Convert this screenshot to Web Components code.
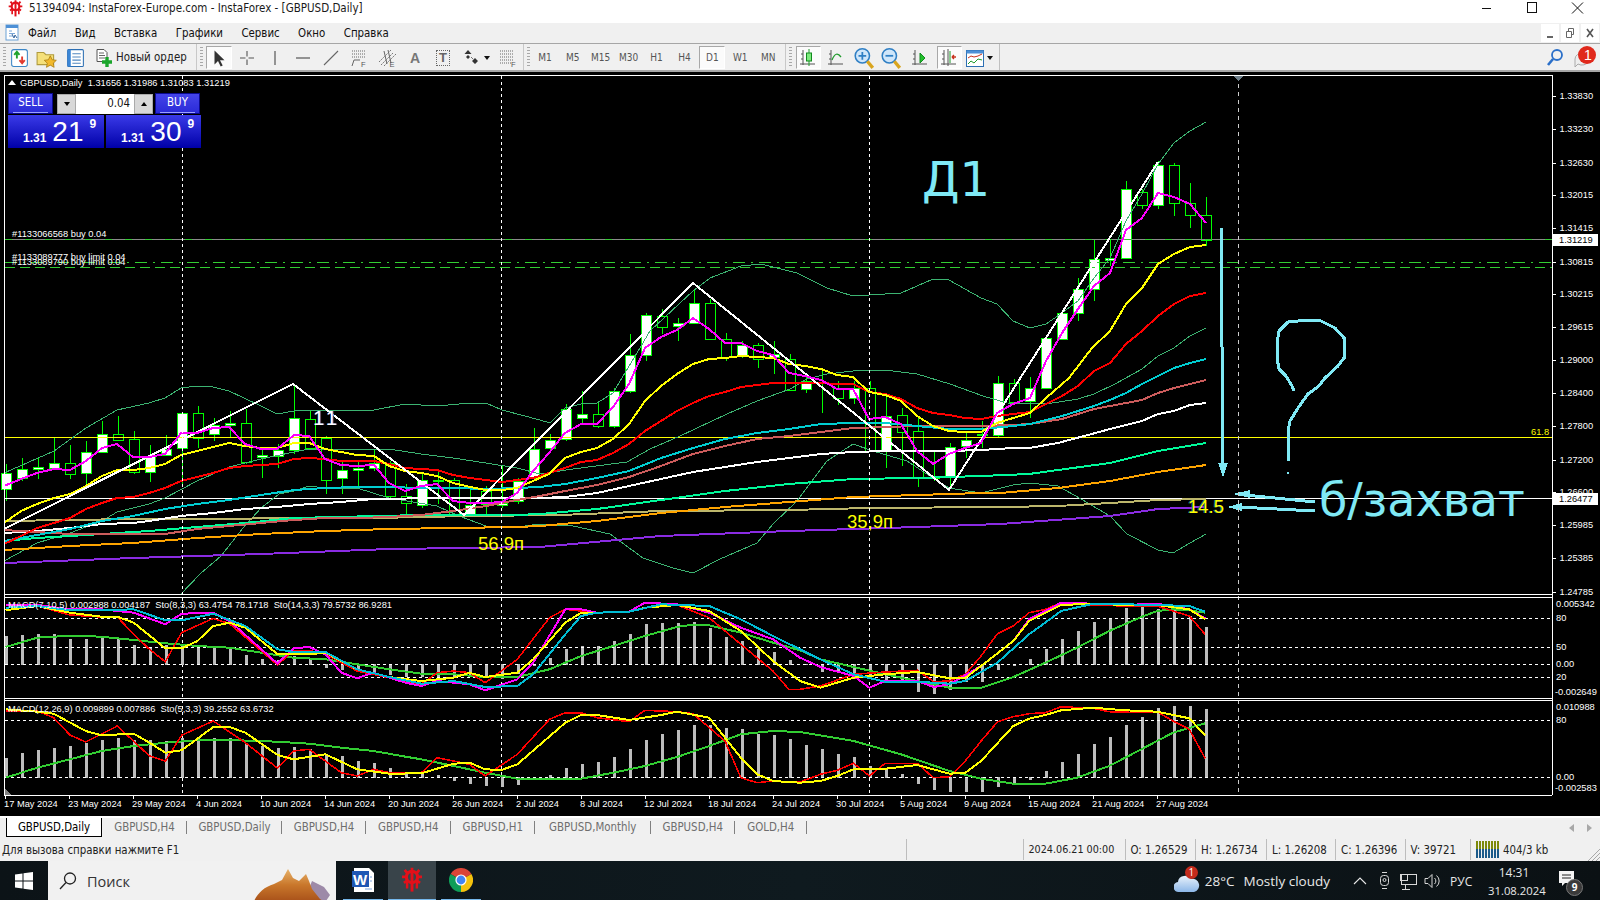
<!DOCTYPE html>
<html lang="ru"><head><meta charset="utf-8"><title>InstaForex</title>
<style>html,body{margin:0;padding:0;background:#000;overflow:hidden}</style>
</head><body>
<mt-app>
<mt-title>51394094: InstaForex-Europe.com - InstaForex - [GBPUSD,Daily]</mt-title>
<mt-menu><span>Файл</span><span>Вид</span><span>Вставка</span><span>Графики</span><span>Сервис</span><span>Окно</span><span>Справка</span></mt-menu>
<mt-toolbar></mt-toolbar>
<mt-chart><mt-order></mt-order></mt-chart>
<mt-tabs>
<mt-tab active style="width:96px">GBPUSD,Daily</mt-tab><mt-tab style="width:85px">GBPUSD,H4</mt-tab><mt-tab style="width:95px">GBPUSD,Daily</mt-tab><mt-tab style="width:84px">GBPUSD,H4</mt-tab><mt-tab style="width:84.5px">GBPUSD,H4</mt-tab><mt-tab style="width:84.5px">GBPUSD,H1</mt-tab><mt-tab style="width:115.5px">GBPUSD,Monthly</mt-tab><mt-tab style="width:84.5px">GBPUSD,H4</mt-tab><mt-tab style="width:71.5px">GOLD,H4</mt-tab>
</mt-tabs>
<mt-status>
<mt-cell style="width:906px;border:0;padding-left:2px">Для вызова справки нажмите F1</mt-cell><mt-cell style="width:116.5px"></mt-cell><mt-cell style="width:102px;font-size:10.7px">2024.06.21 00:00</mt-cell><mt-cell style="width:70.5px">O: 1.26529</mt-cell><mt-cell style="width:71px">H: 1.26734</mt-cell><mt-cell style="width:69px">L: 1.26208</mt-cell><mt-cell style="width:69.6px">C: 1.26396</mt-cell><mt-cell style="width:65.4px">V: 39721</mt-cell><mt-cell style="width:120px" data-traffic>404/3 kb</mt-cell>
</mt-status>
<mt-taskbar></mt-taskbar>
</mt-app>
<script>
const UI="'DejaVu Sans Condensed','DejaVu Sans',sans-serif";
const NUM="'Liberation Sans',Arial,sans-serif";
const SEG="'Open Sans','Noto Sans',sans-serif";
const DJ="'DejaVu Sans',sans-serif";
function def(tag,css,html,init){customElements.define(tag,class extends HTMLElement{constructor(){super();const r=this.attachShadow({mode:'open'});r.innerHTML='<style>'+css+'</style>'+html;if(init)init(r,this);}});}

const LOGO=(s,h)=>`<svg width="${s}" height="${h}" viewBox="0 0 18 20"><g fill="none" stroke="#e2101a"><circle cx="9" cy="7.5" r="4.6" stroke-width="2.6"/><path d="M9 0v3M3 1.8l2 2.4M15 1.8l-2 2.4M.8 7.5h3M17.2 7.5h-3M2.4 12.4l2.4-1.8M15.6 12.4l-2.4-1.8" stroke-width="2.2"/><path d="M9 3.5V19.5" stroke-width="2.4"/><path d="M5 10.5V17M13 10.5V17" stroke-width="2"/></g></svg>`;

def('mt-app',`:host{display:flex;flex-direction:column;width:1600px;height:900px;overflow:hidden;background:#f0f0f0;font-family:${UI};font-stretch:condensed}`,`<slot></slot>`);

def('mt-title',`:host{display:flex;align-items:center;height:23px;background:#fff;color:#1a1a1a;font:11.5px ${UI};font-stretch:condensed;flex:none}
.l{width:29px;display:flex;justify-content:center;padding-left:2px;box-sizing:border-box;margin-top:-7px}
.t{flex:1;margin-top:-7px}
.b{display:flex;margin-top:-8px}.b svg{display:block;width:45px;height:14px}`,
`<div class="l">${LOGO(15,17)}</div><div class="t"><slot></slot></div><div class="b"><svg viewBox="0 0 45 14"><path d="M17 7.5h9" stroke="#111" fill="none"/></svg><svg viewBox="0 0 45 14"><rect x="17.5" y="1.5" width="9" height="10" stroke="#111" fill="none"/></svg><svg viewBox="0 0 45 14"><path d="M17 1.5l11 11M28 1.5l-11 11" stroke="#111" fill="none"/></svg></div>`);

def('mt-menu',`:host{display:flex;align-items:center;height:20px;background:#f0f0f0;border-bottom:1px solid #a6a6a6;font:11.4px ${UI};font-stretch:condensed;color:#111;flex:none;box-sizing:content-box}
.ic{width:28px;padding-left:4px;box-sizing:border-box;display:flex}
.m{display:flex;gap:18.4px;flex:1}
.w{display:flex;gap:2px;padding-right:1px}
.w svg{width:18px;height:18px;background:#fff;display:block}
::slotted(span){display:block}`,
`<div class="ic"><svg width="16" height="18" viewBox="0 0 16 18"><rect x="2" y="1" width="12" height="15" fill="#fff" stroke="#6ba1d6"/><rect x="2" y="1" width="12" height="3" fill="#4d90d6"/><path d="M5 7h3M5 9.5h6M5 12h4" stroke="#7aa7d8"/><path d="M8 10l2 4 1-3 2 3" stroke="#39689e" fill="none"/></svg></div><div class="m"><slot></slot></div>
<div class="w"><svg viewBox="0 0 18 18"><rect x="6" y="12" width="6" height="2" fill="#666"/></svg><svg viewBox="0 0 18 18"><path d="M5.5 7.5h5v6h-5zM7.5 7V4.5h5v6H11" fill="none" stroke="#666"/></svg><svg viewBox="0 0 18 18"><path d="M6 5l6 8M12 5l-6 8" stroke="#555" stroke-width="1.6" fill="none"/></svg></div>`);

/* ---- toolbar ---- */
const sv=(c,w=20,h=20)=>`<svg width="${w}" height="${h}" viewBox="0 0 20 20" fill="none">${c}</svg>`;
const AX='<path d="M5 2v15M2 16h15M5 6H3M5 11H3" stroke="#555"/>';
def('mt-tool',`:host{display:flex;align-items:center;justify-content:center;flex:none;width:28px;height:23px;box-sizing:border-box;font:11.4px ${UI};font-stretch:condensed;color:#444;gap:2px;margin-top:1px}
:host([pressed]){background:#fbfbfb;border:1px solid;border-color:#a8a8a8 #fff #fff #a8a8a8;margin:1px 1px 0;width:26px}`,`<slot></slot>`);
def('mt-grip',`:host{display:flex;flex:none;align-items:center;justify-content:center;height:24px}.g{width:3px;height:20px;background:repeating-linear-gradient(#a8a8a8 0 1px,transparent 1px 3px)}.s{width:1px;height:26px;background:#c8c8c8;margin-right:3px}`,`<div class="s"></div><div class="g"></div>`);

def('mt-toolbar',`:host{display:flex;align-items:center;height:26px;background:#f0f0f0;border-bottom:2px solid #a6a6a6;flex:none;padding-left:3px;box-sizing:content-box}
.sp{flex:1}
.d{width:0;height:0;border:3px solid transparent;border-top:4px solid #111;margin-top:3px}
.g0{width:3px;height:20px;background:repeating-linear-gradient(#a8a8a8 0 1px,transparent 1px 3px);flex:none}
text{font-family:${NUM}}
`,
(()=>{
 const t=(c,w,a='')=>`<mt-tool ${a} ${w?`style="width:${w}px"`:''}>${c}</mt-tool>`;
 let h='<div class="g0"></div>';
 h+=t(sv(`<rect x="2.5" y="2.5" width="15" height="16" rx="2" fill="#fff" stroke="#3b86c6"/><path d="M7.5 11V5M5 7.5l2.5-3 2.5 3" stroke="#1fa32c" stroke-width="1.8"/><path d="M12.5 9v6M10 12.5l2.5 3 2.5-3" stroke="#e23a2e" stroke-width="1.8"/>`,21,21),27);
 h+=t(sv(`<path d="M1 5h6l2 2h7v9H1z" fill="#f5e07a" stroke="#b09b3e"/><path d="M13 8l1.7 3.6 3.8.5-2.8 2.6.8 3.8-3.5-2-3.5 2 .8-3.8-2.8-2.6 3.8-.5z" fill="#f2b92b" stroke="#a87a12" stroke-width=".7"/>`,22,22),28);
 h+=t(sv(`<rect x="2.5" y="2.5" width="15" height="16" rx="1" fill="#fff" stroke="#2d6fb3"/><rect x="2.5" y="2.5" width="3" height="16" fill="#3b86d6"/><path d="M7 6.5h8M7 9.5h8M7 12.5h8M7 15.5h8" stroke="#5288c0"/>`,21,21),28);
 h+=`<mt-tool style="width:104px;justify-content:flex-start;padding-left:5px;color:#222;white-space:nowrap;gap:2px">${sv(`<path d="M3 1.5h7l3 3v9H3z" fill="#fff" stroke="#555"/><path d="M5 5h5M5 7.5h6M5 10h6" stroke="#666"/><path d="M13 9v10M8 14h10" stroke="#1aa52b" stroke-width="3.4"/>`,20,22)}<span style="margin-top:-1px">Новый ордер</span></mt-tool>`;
 h+='<mt-grip style="width:12px"></mt-grip>';
 h+=t(sv(`<path d="M5.5 2.5v14l3.5-3.5 2.7 5.5 2-1-2.7-5.3h4.5z" fill="#333"/>`),0,'pressed');
 h+=t(sv(`<path d="M10 3v5.5M10 11.5V17M3 10h5.5M11.5 10H17" stroke="#555" stroke-width="1.1"/>`));
 h+=t(sv(`<path d="M10 3v14" stroke="#555" stroke-width="1.2"/>`));
 h+=t(sv(`<path d="M3 10h14" stroke="#555" stroke-width="1.2"/>`));
 h+=t(sv(`<path d="M3 17L17 3" stroke="#666" stroke-width="1.1"/>`));
 h+=t(sv(`<path d="M3 3h14M3 6h14M3 9h14" stroke="#666" stroke-dasharray="1 1"/><path d="M3 18l2-6h6" stroke="#666"/><text x="12" y="18.6" font-size="7.5" fill="#555">F</text>`));
 h+=t(sv(`<path d="M2 14L14 2M4 17L16 5M7 18L19 6" stroke="#777" stroke-dasharray="2 1"/><path d="M7 3l3 13M11 2l3 13" stroke="#666"/><text x="12.5" y="19" font-size="7.5" fill="#555">E</text>`));
 h+=t(`<span style="font:bold 14px ${NUM};color:#777">A</span>`);
 h+=t(`<span style="font:bold 13px/14px ${NUM};color:#666;outline:1px dotted #666;padding:0 2px">T</span>`);
 h+=`<mt-tool style="width:36px;padding-left:2px">${sv(`<path d="M6 2l3.5 4h-7z" fill="#333"/><path d="M6 7l2 2-2 2-2-2zM13 10l3 3-3 3-3-3z" fill="#333"/><path d="M9 9l2 2" stroke="#777"/>`)}<div class="d"></div></mt-tool>`;
 h+=t(sv(`<path d="M3 3h14M3 6h14M3 9h14M3 12h14M3 15h11" stroke="#666" stroke-dasharray="1 1"/><text x="14" y="19" font-size="7.5" fill="#555">F</text>`));
 h+='<mt-grip style="width:10px"></mt-grip>';
 ['M1','M5','M15','M30','H1','H4','D1','W1','MN'].forEach(p=>{h+=t(`<span style="font:10px ${UI};font-stretch:condensed;color:#555">${p}</span>`,p=='D1'?0:27.9,p=='D1'?'pressed':'');});
 h+='<mt-grip style="width:12.5px"></mt-grip>';
 const W=27.6;
 h+=t(sv(`${AX}<path d="M11 1v17" stroke="#1f9a2b"/><rect x="8.5" y="5" width="5" height="8" fill="#7dea7d" stroke="#118a1f"/>`),W-2,'pressed');
 h+=t(sv(`${AX}<path d="M6 12q4-10 9-3" stroke="#1f9a2b" stroke-width="1.3"/>`),W);
 h+=t(sv(`<circle cx="8.5" cy="8" r="6.5" fill="#cfe6fa" stroke="#2f7fc4" stroke-width="1.4"/><path d="M5 8h7M8.5 4.5v7" stroke="#2f7fc4" stroke-width="1.6"/><path d="M13 13l5 6" stroke="#d9a51e" stroke-width="3"/>`,22,22),W);
 h+=t(sv(`<circle cx="8.5" cy="8" r="6.5" fill="#cfe6fa" stroke="#2f7fc4" stroke-width="1.4"/><path d="M5 8h7" stroke="#2f7fc4" stroke-width="1.6"/><path d="M13 13l5 6" stroke="#d9a51e" stroke-width="3"/>`,22,22),W);
 h+=t(sv(`${AX}<path d="M10 5l5 5-5 5z" fill="#22c02c" stroke="#118a1f"/>`),W+3);
 h+=t(sv(`${AX}<path d="M9 1v17" stroke="#555"/><path d="M11 3v12" stroke="#1f9a2b"/><path d="M17 9h-4M13 9l2-2M13 9l2 2" stroke="#c8321c" stroke-width="1.4"/>`),W-2,'pressed');
 h+=`<mt-tool style="width:34px;gap:2px;padding-left:2px;justify-content:flex-start">${sv(`<rect x="1.5" y="2.5" width="17" height="16" fill="#fff" stroke="#2d6fb3"/><rect x="1.5" y="2.5" width="17" height="3" fill="#4d90d6"/><path d="M3 10l3-2 3 1 4-1 4-2" stroke="#c8321c"/><path d="M3 16l3-3 3 2 4-4 4 1" stroke="#1f9a2b"/>`,20,22)}<div class="d" style="margin-top:3px"></div></mt-tool>`;
 h+='<div style="width:1px;height:26px;background:#c0c0c0;flex:none;margin-left:2px"></div><div class="sp"></div>';
 h+=`<mt-tool style="width:26px">${sv(`<circle cx="12" cy="7" r="5" stroke="#2a6fc9" stroke-width="1.8"/><path d="M8 11l-5 6" stroke="#2a6fc9" stroke-width="2.6"/>`)}</mt-tool>`;
 h+=`<div style="width:32px;height:24px;position:relative;flex:none"><svg width="32" height="26" style="position:absolute;top:-1px;left:0"><path d="M7 15a7 6 0 1 1 3 5l-3 3z" fill="#eee" stroke="#aaa"/><circle cx="19" cy="11" r="9" fill="#e0291c"/><text x="16" y="16" font-size="14" fill="#fff">1</text></svg></div>`;
 return h;
})());

/* ---- order panel ---- */
def('mt-order',`:host{position:absolute;left:8px;top:21px;display:grid;grid-template-columns:96px 95px;column-gap:2px;row-gap:1px;font-family:${NUM};color:#fff;width:193px}
.top{grid-column:1/3;display:flex;height:21px;gap:3px;align-items:stretch}
.btn{background:linear-gradient(#4444e8,#2a2ad8);border:1px solid #0a0a90;width:45px;box-sizing:border-box;text-align:center;font:11.4px ${UI};font-stretch:condensed;line-height:17px;position:relative}
.btn:after{content:"";position:absolute;left:4px;right:4px;bottom:0;height:1px;background:#9aa0ff}
.st{display:flex;width:96px;height:20px;margin-left:1px;margin-right:-1px;margin-top:1px;background:#000;gap:0}
.ar{width:19px;background:#d8d8d8;border:1px solid #aaa;box-sizing:border-box;display:flex;align-items:center;justify-content:center}
.ar i{display:block;width:0;height:0;border:3px solid transparent}
.dn i{border-top:4px solid #000;margin-top:3px}.up i{border-bottom:4px solid #000;margin-bottom:3px}
.in{flex:1;background:#fff;color:#111;text-align:right;font:11.4px ${UI};font-stretch:condensed;line-height:18px;padding-right:4px}
.px{height:33px;background:linear-gradient(#3a3ae8,#0000a8);display:flex;align-items:flex-end;padding-left:15px;box-sizing:border-box;white-space:nowrap;position:relative}
.a{font-size:12px;line-height:14px;margin-bottom:3px;font-weight:600}
.b{font-size:28px;line-height:32px;margin-left:6px}
.c{font-size:12px;line-height:13px;align-self:flex-start;margin:3px 0 0 6px;font-weight:600}`,
`<div class="top"><div class="btn">SELL</div><div class="st"><div class="ar dn"><i></i></div><div class="in">0.04</div><div class="ar up"><i></i></div></div><div class="btn">BUY</div></div>
<div class="px"><span class="a">1.31</span><span class="b">21</span><span class="c">9</span></div><div class="px"><span class="a">1.31</span><span class="b">30</span><span class="c">9</span></div>`);

/* ---- chart ---- */
const MA={
mag:"4,485 21,478 37,472 54,468 70,469 86,460 102,447 117,443 133,456 149,456 165,453 181,432 197,432 213,427 229,426 245,443 261,448 277,448 294,434 309,435 325,458 341,464 357,465 374,464 389,482 405,490 421,485 437,483 453,500 470,502 486,502 502,501 517,492 533,470 549,452 565,432 581,423 597,423 613,406 629,383 645,347 661,336 677,329 693,317 709,328 725,342 741,342 757,350 773,354 789,372 805,375 821,379 837,388 853,388 869,418 885,416 901,423 917,450 933,463 949,453 965,447 981,442 997,412 1013,403 1030,397 1046,360 1062,332 1078,308 1094,285 1110,272 1126,229 1142,217 1158,192 1174,196 1190,203 1206,222",
yel:"4,522 21,510 37,503 54,497 70,493 86,485 102,475 117,469 133,469 149,467 165,463 181,454 197,450 213,446 229,442 245,445 261,447 277,447 294,442 309,442 325,448 341,451 357,454 374,455 389,465 405,470 421,472 437,475 453,482 470,486 486,489 502,489 517,487 533,480 549,473 565,457 581,451 597,447 613,438 629,423 645,400 661,385 677,373 693,363 709,358 725,357 741,355 757,356 773,357 789,363 805,365 821,368 837,374 853,376 869,391 885,394 901,400 917,415 933,425 949,430 965,431 981,431 997,422 1013,417 1030,412 1046,397 1069,377 1092,347 1110,330 1126,303 1142,287 1158,263 1174,253 1190,246 1206,244",
red:"4,543 21,535 37,527 54,522 70,517 86,508 102,502 117,497 133,496 149,492 165,487 181,480 197,476 213,472 229,467 245,465 261,464 277,463 294,458 309,457 325,458 341,460 357,460 374,460 389,463 405,467 421,468 437,469 453,474 470,477 486,479 502,481 517,479 533,477 549,472 565,467 581,461 597,459 613,452 629,443 645,430 661,420 677,410 693,402 709,395 725,391 741,386 757,384 773,382 789,382 805,382 821,382 837,383 853,383 869,391 885,393 901,398 917,407 933,412 949,414 965,417 981,418 997,415 1013,413 1030,411 1046,403 1062,395 1078,385 1094,370 1110,362 1126,343 1142,330 1158,315 1174,303 1190,295 1206,292",
cy:"4,540 37,534 70,528 102,520 133,515 165,508 197,503 229,499 261,494 294,489 325,487 357,486 389,486 421,487 453,487 486,488 517,487 540,486 565,483 597,477 629,470 661,457 693,447 725,438 757,432 789,428 821,423 853,422 885,422 917,425 949,428 981,428 1013,425 1030,423 1062,415 1094,405 1110,399 1126,392 1142,383 1158,375 1174,367 1190,362 1206,358",
ros:"4,529 37,531 70,533 102,533 133,533 165,533 197,528 229,525 261,522 294,519 325,517 357,517 389,516 421,514 453,510 486,505 517,499 540,495 565,490 597,484 629,476 661,465 693,453 725,445 757,438 789,435 821,431 853,427 885,426 917,425 949,425 981,425 1013,424 1030,423 1062,418 1094,408 1110,405 1142,399 1158,392 1174,387 1190,383 1206,379",
wh:"4,532 37,530 70,527 102,523 133,522 149,520 181,515 213,512 245,508 277,506 309,503 341,501 374,498 440,497 540,497 565,496 597,492 629,485 661,478 693,471 725,466 757,461 789,457 821,453 853,451 885,450 917,450 949,450 981,449 1013,447 1029,447 1058,442 1088,434 1110,428 1142,420 1158,413 1174,410 1190,404 1206,402",
tl:"4,540 37,537 70,535 102,533 149,530 197,526 245,522 294,517 421,514 470,514 517,514 540,513 597,508 661,499 725,490 789,483 853,478 917,477 981,475 1029,473 1058,469 1110,462 1158,450 1206,442",
or:"4,549 70,545 133,542 197,537 261,533 325,530 389,528 453,527 517,526 540,525 597,520 661,512 725,506 789,501 853,496 917,494 981,492 1000,492 1058,487 1110,480 1158,471 1206,464",
kh:"4,520 133,518 374,517 470,515 560,514 661,510 789,509 869,507 1000,506 1058,505 1110,502 1158,499 1206,498",
pu:"4,562 133,557 261,553 389,548 540,546 661,535 789,530 917,526 1000,523 1110,515 1158,508 1206,506",
bu:"4,472 54,450 86,427 117,409 149,402 165,397 181,387 197,385 213,386 229,390 261,405 277,413 294,410 325,409 374,409 405,403 437,405 470,402 486,402 502,409 540,419 550,422 565,407 581,403 597,402 613,392 650,330 693,290 710,277 741,265 761,263 797,272 827,287 853,295 885,293 901,292 933,278 949,279 981,297 997,303 1013,320 1030,327 1046,323 1062,312 1078,300 1094,277 1110,257 1126,220 1142,193 1158,163 1174,142 1190,130 1206,121",
bm:"4,560 37,542 70,532 102,520 117,511 149,503 165,497 197,480 229,466 261,458 294,451 309,448 357,448 389,448 421,453 453,457 486,462 517,467 540,473 573,468 627,461 650,448 680,435 727,413 757,400 790,388 807,378 827,373 853,370 885,369 917,373 950,383 983,395 1007,402 1046,403 1078,398 1094,393 1115,383 1142,368 1158,355 1174,347 1190,335 1206,327",
bl:"181,593 200,573 221,555 243,527 261,507 279,493 294,490 309,485 325,487 357,487 389,497 437,505 459,515 486,525 517,526 540,523 573,525 610,533 643,557 673,567 693,572 720,558 757,542 773,523 797,500 827,460 853,443 873,450 907,460 933,477 949,487 981,492 1013,484 1030,482 1058,485 1081,498 1110,515 1127,533 1158,549 1173,552 1190,542 1206,533",
zz:"4,528 293,383 464,514 693,282 949,489 1158,161"};

const cA=[[335,385,310,420,1],[325,352,290,360,1],[319,325,287,355,1],[307,320,232,320,1],[307,338,252,355,0],[274,337,240,370,1],[220,274,180,274,1],[220,236,165,236,0],[235,333,210,338,0],[285,334,252,362,1],[265,283,222,283,1],[157,262,157,370,1],[157,232,135,262,0],[193,220,172,240,1],[187,193,150,230,1],[187,304,145,308,0],[281,287,265,350,1],[268,285,250,320,1],[172,268,68,278,1],[175,260,150,265,0],[232,358,225,400,0],[328,352,300,398,1],[320,328,300,380,1],[305,320,265,330,1],[305,405,300,410,0],[405,427,370,460,0],[358,432,335,440,1],[358,361,330,430,1],[358,460,350,462,0],[433,460,385,462,1],[390,430,375,462,0],[425,432,315,440,1],[360,420,350,430,1],[265,350,200,355,1]];
const cB=[[538,562,520,575,1],[445,535,430,540,1],[460,472,390,485,1],[460,495,425,500,0],[390,494,380,500,1],[283,391,220,395,1],[163,283,155,300,1],[165,197,145,220,0],[187,195,170,240,1],[127,185,85,190,1],[127,235,115,238,0],[235,287,215,300,0],[253,283,240,290,1],[253,295,245,322,0],[280,287,240,340,1],[295,388,280,390,0],[360,385,340,395,1],[364,367,330,455,1],[380,412,360,432,0],[382,412,360,430,1],[380,570,360,572,0],[465,570,400,620,1],[463,513,440,615,0],[510,650,470,678,0],[648,652,570,660,1],[557,648,545,680,1],[538,555,510,590,1],[519,522,480,560,1],[367,523,345,530,1],[367,422,355,430,0]];
const cC=[[770,810,738,860,1],[622,770,620,772,1],[547,625,545,627,1],[475,547,440,570,1],[385,475,328,510,1],[382,386,325,405,1],[175,382,150,385,1],[183,223,175,233,0],[102,222,90,233,1],[102,217,95,255,0],[217,253,155,290,0],[253,326,198,345,0]];
const Z9=(a)=>a.map(([x,y])=>[x/1.96,590+y/3]);
const Z10=(a)=>a.map(([x,y])=>[800+x/1.96,590+y/3]);
const pair=s=>s.trim().split(/\s+/).map(p=>p.split(',').map(Number));
const S={
g1:[pair("11,168 73,140 137,134 199,137 262,147 324,157 387,165 450,170 512,185 575,200 638,205 700,220 763,235 826,248 889,250 951,258 1014,258 1077,235 1139,195 1202,165 1264,135 1327,108 1358,101 1390,103 1452,125 1515,155"),pair("0,178 40,205 105,228 167,250 230,270 293,290 355,290 418,258 481,215 543,170 606,120 669,78 700,60 731,55 763,58 794,65")],
r1:[pair("11,40 73,45 137,72 199,78 230,78 262,130 293,175 324,212 356,125 418,82 450,98 544,222 575,178 606,178 638,190 700,240 763,260 826,280 857,245 889,240 920,245 951,275 1014,205 1077,80 1108,55 1139,60 1170,65 1233,62 1264,35 1327,42 1390,80 1452,160 1515,240 1546,295"),pair("0,295 40,285 105,250 167,243 230,238 262,272 293,270 324,250 355,195 387,128 418,105 449,65 481,55 512,35 575,42 637,45 700,45 731,60 763,75 794,130")],
y1:[pair("11,58 73,45 137,65 199,77 230,77 262,95 324,172 356,172 387,150 418,105 450,95 481,110 544,190 606,190 638,185 700,235 763,258 826,270 889,260 920,245 951,258 1014,245 1045,205 1108,95 1139,65 1170,65 1233,62 1264,50 1327,42 1390,60 1452,120 1515,210"),pair("0,270 40,290 105,260 167,250 230,243 293,262 324,260 355,225 418,150 449,90 481,65 512,42 575,38 637,42 700,42 763,55 794,85")],
m1:[pair("11,42 73,42 137,55 199,55 262,65 324,100 356,68 418,65 450,90 544,218 575,172 606,168 638,190 669,245 700,262 732,245 795,275 826,285 857,270 920,280 951,298 1014,265 1045,215 1108,55 1139,55 1170,65 1233,62 1264,35 1327,40 1390,65 1452,110 1515,145"),pair("0,200 40,228 105,255 136,290 167,270 230,270 262,288 293,280 355,225 418,150 449,85 512,35 575,38 637,42 700,38 763,55 794,82")],
c1:[pair("11,50 73,45 137,58 199,58 262,55 324,88 356,88 418,68 481,105 544,175 575,183 638,183 700,235 763,258 826,278 889,270 951,288 1014,285 1045,250 1108,130 1139,75 1170,65 1233,62 1296,40 1390,45 1452,85 1515,135"),pair("0,175 40,205 105,250 167,272 230,272 293,278 324,270 387,215 449,130 512,60 575,38 637,40 700,42 763,45 794,62")],
g2:[pair("11,560 73,530 137,505 199,480 262,465 324,455 387,448 450,447 544,452 606,458 669,470 732,480 795,497 826,505 889,525 951,545 1014,563 1077,565 1139,563 1202,545 1264,525 1327,498 1390,465 1452,430 1515,420"),pair("0,423 105,450 198,490 293,540 355,563 418,578 481,578 543,560 606,525 669,475 731,425 794,397")],
r2:[pair("11,360 73,360 105,380 137,432 168,453 230,405 293,495 324,510 356,433 418,390 481,455 544,532 575,480 606,475 669,545 700,555 732,535 763,545 826,545 857,500 920,520 951,555 1014,490 1077,385 1108,365 1139,365 1170,380 1233,392 1264,358 1327,362 1358,368 1421,450 1452,560 1484,575 1515,570"),pair("0,573 40,550 73,538 105,517 136,555 167,517 230,517 261,560 293,557 324,510 355,450 387,393 418,377 449,368 481,365 512,347 575,352 606,362 669,365 700,362 731,390 763,415 794,502")],
y2:[pair("11,355 73,362 105,368 168,420 199,433 262,428 293,455 324,485 356,478 418,408 450,408 481,425 544,492 575,505 638,490 700,535 763,548 826,547 889,518 920,515 951,535 983,537 1014,520 1108,395 1139,372 1170,372 1233,387 1296,372 1327,362 1390,380 1452,500 1484,550 1515,570"),pair("0,575 40,570 73,555 105,535 167,533 230,522 293,548 324,545 355,510 418,405 449,383 481,372 512,358 575,350 637,358 700,362 763,382 794,433")]
};
const H1=[135,132,128,130,145,145,140,145,163,170,162,162,168,170,170,193,205,208,195,205,228,235,235,240,250,255,255,255,255,255,255,260,245,222,200,175,165,165,150,130,100,97,97,93,110,138,150,175,183,207,220,240,240,245,260,270,270,300,307,295,270,270,235,222,205,175,143,120,93,85,50,47,55,55,75,108];
const H2=[500,487,477,470,465,455,448,442,448,448,450,440,440,440,440,458,465,470,468,475,490,495,510,517,530,545,545,552,566,575,582,584,578,558,552,532,520,513,498,475,448,430,418,403,403,412,415,428,432,445,462,475,490,498,525,530,550,575,593,600,600,600,585,575,563,540,513,490,460,438,403,378,352,345,345,355];

function chartSvg(){
 const X=i=>5.5+16*i; let o='';
 const cand=(c,i,oy)=>{const y=v=>Math.round(oy+v/3),x=Math.round(X(i)),[t,b,h,l,f]=c;
  o+=`<path d="M${x+.5} ${y(h)}V${y(l)}" stroke="#00ff00"/><rect x="${x-5+.5}" y="${y(t)+.5}" width="10" height="${Math.max(1,y(b)-y(t))}" fill="${f?'#fff':'#000'}" stroke="#00ff00"/>`;};
 cA.forEach((c,i)=>cand(c,i,360));cB.forEach((c,i)=>cand(c,i+34,260));cC.forEach((c,i)=>cand(c,i+64,130));
 const line=(pts,col,w)=>`<polyline points="${pts}" fill="none" stroke="${col}" stroke-width="${w}"/>`;
 const hl=(y,col,w=1,d='')=>`<path d="M5 ${y+.5}H1552" stroke="${col}" stroke-width="${w}" ${d?`stroke-dasharray="${d}"`:''}/>`;
 o+=hl(238,'#8a8a8a')+hl(238,'#32cd32',1,'7 13')+hl(261,'#32cd32',1,'12 6 2 6')+hl(266,'#32cd32',1,'10 5');
 o+=hl(436,'#ffff00')+hl(497,'#ffffff');
 ['bu','bm','bl'].forEach(k=>o+=line(MA[k],'#3cb371',1));
 [['pu','#8a2be2'],['kh','#bdb76b'],['or','#ffa500'],['tl','#00fa9a'],['wh','#ffffff'],['ros','#cd5c5c'],['cy','#00ced1'],['red','#ff0000'],['yel','#ffff00']].forEach(([k,c])=>o+=line(MA[k],c,2));
 o+=line(MA.zz,'#ffffff',2);
 o+=line(MA.mag,'#ff00ff',2);
 const cy='#7fe9f5';
 o+=`<path d="M1221 227L1223 464" stroke="${cy}" stroke-width="3" fill="none"/><path d="M1218 462h10l-5 14z" fill="${cy}"/>
 <path d="M1294 390l-2-5-6-10-7-7-2-11v-14l2-13 9-9 20-2 11 0 16 8 9 10v20l-6 8-13 12-6 8-11 8-10 14-8 13-2 10v30" stroke="${cy}" stroke-width="3" fill="none"/><rect x="1287" y="471" width="2" height="2" fill="${cy}"/>
 <path d="M1315 501L1245 494" stroke="${cy}" stroke-width="3"/><path d="M1233 493l17-4v8z" fill="${cy}"/>
 <path d="M1315 510L1238 506" stroke="${cy}" stroke-width="3"/><path d="M1227 506l15-4v8z" fill="${cy}"/>`;
 [182,501,869].forEach(x=>o+=`<path d="M${x+.5} 75V794" stroke="#fff" stroke-dasharray="3 3"/>`);
 o+=`<path d="M1238.5 75V794" stroke="#ccc" stroke-dasharray="4 4"/><path d="M1233 75h11l-5.5 5z" fill="#6e7f8a"/>`;
 const hist=(H,base,oy)=>{H.forEach((t,i)=>{const x=Math.round(X(i))-1;let a=Math.round(oy+t/3),b=base;o+=`<rect x="${x}" y="${Math.min(a,b)}" width="3" height="${Math.abs(a-b)+1}" fill="#bdbdbd"/>`;});};
 hist(H1,663,590);hist(H2,776,590);
 const dots=(y)=>`<path d="M5 ${y+.5}H1552" stroke="#fff" stroke-dasharray="3 3"/>`;
 o+=dots(617)+dots(646)+dots(663)+dots(676)+dots(719)+dots(776);
 const pl=(s,c,w)=>{const pts=Z9(s[0]).concat(Z10(s[1])).map(p=>p[0].toFixed(1)+','+p[1].toFixed(1)).join(' ');o+=line(pts,c,w);};
 pl(S.g1,'#32cd32',2);pl(S.r1,'#ff0000',1.6);pl(S.m1,'#ff00ff',2);pl(S.y1,'#ffff00',2);pl(S.c1,'#00bcd4',2);
 pl(S.g2,'#32cd32',2);pl(S.r2,'#ff0000',1.6);pl(S.y2,'#ffff00',2);
 o+=`<path d="M5 794v-6l6 6z" fill="#808080"/>`;
 o+=`<path d="M4.5 74V794.5M4 74.5H1552.5V794M4 593.5H1552M4 596.5H1552M4 697.5H1552M4 699.5H1552M4 794.5H1552" stroke="#fff" fill="none"/>`;
 for(let k=0;k<=18;k++){const x=5+64*k;o+=`<path d="M${x+.5} 794V798" stroke="#fff"/>`;}
 return o;
}
const TX=[];
function tx(x,y,s,css){TX.push(`<span class="t" style="left:${x}px;top:${y-71}px;${css||''}">${s}</span>`);}
const NC=`font:9.3px/12px ${NUM};color:#fff;transform:translateY(-6px);`;
tx(12,233,'#1133066568 buy 0.04',NC);tx(12,255.5,'#1133089777 buy limit 0.04',NC);tx(12,260.5,'#1133089790 buy limit 0.04',NC);
tx(20,82,'GBPUSD,Daily&nbsp;&nbsp;1.31656 1.31986 1.31083 1.31219',NC);
tx(8,603.5,'MACD(7,10,5) 0.002988 0.004187&nbsp;&nbsp;Sto(8,3,3) 63.4754 78.1718&nbsp;&nbsp;Sto(14,3,3) 79.5732 86.9281',NC);
tx(8,707.5,'MACD(12,26,9) 0.009899 0.007886&nbsp;&nbsp;Sto(5,3,3) 39.2552 63.6732',NC);
[['1.33830',95],['1.33230',128],['1.32630',162],['1.32015',194],['1.31415',227],['1.30815',261],['1.30215',293],['1.29615',326],['1.29000',359],['1.28400',392],['1.27800',425],['1.27200',459],['1.26600',491],['1.25985',524],['1.25385',557],['1.24785',591]].forEach(([s,y])=>{tx(1559.5,y,s,NC);TX.push(`<i class="tk" style="top:${y-71}px"></i>`);});
[['0.005342',603],['80',617],['50',646],['0.00',663],['20',676],['-0.002649',691],['0.010988',706],['80',719],['0.00',776],['-0.002583',787]].forEach(([s,y])=>{tx(/^-/.test(s)?1555:1556,y,s,NC);});
TX.push(`<span class="t box" style="top:${233-71}px">1.31219</span><span class="t box" style="top:${491.5-71}px">1.26477</span>`);
tx(1531,431,'61.8',NC+'color:#ffff00;');
['17 May 2024','23 May 2024','29 May 2024','4 Jun 2024','10 Jun 2024','14 Jun 2024','20 Jun 2024','26 Jun 2024','2 Jul 2024','8 Jul 2024','12 Jul 2024','18 Jul 2024','24 Jul 2024','30 Jul 2024','5 Aug 2024','9 Aug 2024','15 Aug 2024','21 Aug 2024','27 Aug 2024'].forEach((s,k)=>tx(4+64*k,803,s,NC));
const BIG=`font:18.5px/20px ${NUM};color:#ffff00;`;
tx(478,532.5,'56,9п',BIG);tx(847,511,'35,9п',BIG);tx(1188,496,'14.5',BIG+'text-shadow:-1px 0 #1c6aa8;');
tx(313,405,'11',`font:20px/24px ${NUM};color:#fff;text-shadow:1px 0 #3a5ec0;letter-spacing:3px;`);
tx(922,145,'Д1',`font:48px/66px ${DJ};color:#7fe9f5;`);
tx(1319,468,'б/захват',`font:46px/62px ${DJ};color:#7fe9f5;`);
TX.push(`<svg width="8" height="6" style="position:absolute;left:8px;top:8px"><path d="M0 5h8L4 0z" fill="#fff"/></svg>`);

def('mt-chart',`:host{display:block;position:relative;height:744px;background:#000;flex:none;overflow:hidden}
svg.c{position:absolute;left:0;top:0;display:block}
.t{position:absolute;white-space:nowrap}
.tk{position:absolute;left:1552px;width:4px;height:1px;background:#fff}
.box{left:1553px;width:45px;height:12px;background:#fff;color:#000;font:9.3px/12px ${NUM};padding-left:6px;box-sizing:border-box}`,
`<svg class="c" width="1600" height="744" viewBox="0 71 1600 744" shape-rendering="crispEdges">${chartSvg()}</svg>${TX.join('')}<slot></slot>`);

/* ---- tabs ---- */
def('mt-tabs',`:host{display:flex;height:22px;background:#f0f0f0;flex:none;border-top:2px solid #fff;box-sizing:border-box;padding-left:6px;font:11.4px ${UI};font-stretch:condensed;position:relative}
.n{position:absolute;right:0;top:0;bottom:0;display:flex;gap:13px;align-items:center;padding-right:8px}
.n i{display:block;width:0;height:0;border:4px solid transparent}
.n i:first-child{border-right:5px solid #a8a8a8;border-left:0}.n i:last-child{border-left:5px solid #a8a8a8;border-right:0}`,`<slot></slot><div class="n"><i></i><i></i></div>`);
def('mt-tab',`:host{display:flex;align-items:center;justify-content:center;box-sizing:border-box;height:19px;color:#6e6e6e;position:relative;flex:none;padding-bottom:1px}
:host(:not([active]))::after{content:"";position:absolute;right:0;top:3px;height:13px;width:1px;background:#808080}
:host([active]){background:#fff;color:#000;border:1px solid #000;border-top:0;height:19px}`,`<slot></slot>`);

/* ---- status ---- */
def('mt-status',`:host{display:flex;height:23px;background:#f0f0f0;flex:none;font:11.4px ${UI};font-stretch:condensed;color:#222;position:relative}
.gr{position:absolute;right:0;bottom:0}`,`<slot></slot><svg class="gr" width="14" height="14"><path d="M14 2L2 14M14 6L6 14M14 10L10 14" stroke="#a8a8a8" fill="none"/></svg>`);
def('mt-cell',`:host{display:flex;align-items:center;box-sizing:border-box;border-left:1px solid #bdbdbd;padding-left:5px;white-space:nowrap;flex:none;height:21px;margin-top:1px;gap:3px}
:host([data-traffic])::before{content:"";width:24px;height:17px;background:linear-gradient(#7d8a0a 0 46%,#1b5a8a 46% 100%);-webkit-mask:repeating-linear-gradient(90deg,#000 0 2px,transparent 2px 3px)}`,`<slot></slot>`);

/* ---- taskbar ---- */
def('mt-taskbar',`:host{display:flex;height:40px;flex:none;background:linear-gradient(90deg,#0c1317,#0f1a1f 50%,#0b1114);color:#e8e8e8;align-items:stretch;font:13.5px ${SEG};position:relative}
.st{width:48px;display:flex;align-items:center;justify-content:center}
.se{width:288px;background:#f1f1f1;display:flex;align-items:center;color:#333;font-size:14.5px;position:relative;overflow:hidden}
.se .mg{margin:0 9px 0 10px}
.fox{position:absolute;right:0;bottom:0}
.app{width:40px;margin-left:5px;box-sizing:border-box;border-bottom:2px solid #76b9ed;display:flex;align-items:center;justify-content:center;position:relative}
.app.first{margin-left:7px}
.app.act{width:48px;background:#39444a}
.sp{flex:1}
.tr{display:flex;align-items:center;white-space:nowrap;position:relative}
.ck{width:52px;text-align:center;font-size:12px;line-height:17px;margin-left:14px}
.bd{position:absolute;border-radius:50%;color:#fff;text-align:center;font-size:10px}`,
`<div class="st"><svg width="18" height="18" viewBox="0 0 18 18" fill="#fff"><path d="M0 2.5l7.5-1v7H0zM8.5 1.3L18 0v8.5H8.5zM0 9.5h7.5v7L0 15.5zM8.5 9.5H18V18l-9.5-1.3z"/></svg></div>
<div class="se"><svg class="mg" width="20" height="20" viewBox="0 0 20 20" fill="none" stroke="#222" stroke-width="1.3"><circle cx="12" cy="7.5" r="5.5"/><path d="M8 11.5L2 18"/></svg><span>Поиск</span>
<svg class="fox" width="82" height="32" viewBox="0 0 82 32"><defs><linearGradient id="f" x1="0" y1="0" x2="0" y2="1"><stop offset="0" stop-color="#e8b26a"/><stop offset=".5" stop-color="#c9772b"/><stop offset="1" stop-color="#a9521a"/></linearGradient></defs><path d="M58 12l12 6 6 8-4 6H50z" fill="#9d8aa8"/><path d="M0 32c4-8 10-14 20-17l8-4 6-11 5 9 6 3 7-7 3 7 3 8 8 10 3 2H0z" fill="url(#f)"/></svg></div>
<div class="app first"><svg width="24" height="26" viewBox="0 0 24 26"><path d="M3 1h15l5 5v19H3z" fill="#fff"/><rect x="1" y="4" width="17" height="16" fill="#1f57b4"/><text x="2" y="17.5" font-size="15" font-weight="bold" fill="#fff" style="font-family:${NUM}">W</text><path d="M14 22h7M19 10h2M19 14h2" stroke="#7aa3de"/></svg></div>
<div class="app act">${LOGO(22,26)}</div>
<div class="app"><svg width="24" height="24" viewBox="0 0 24 24"><path d="M1.6 6A12 12 0 0 1 22.4 6L12 12z" fill="#db4437"/><path d="M22.4 6A12 12 0 0 1 12 24L12 12z" fill="#f4c20d"/><path d="M12 24A12 12 0 0 1 1.6 6L12 12z" fill="#0f9d58"/><circle cx="12" cy="12" r="5.6" fill="#fff"/><circle cx="12" cy="12" r="4.4" fill="#4285f4"/></svg></div>
<div class="sp"></div>
<div class="tr"><svg width="26" height="26" viewBox="0 0 26 26"><defs><linearGradient id="cl" x1="0" y1="0" x2="0" y2="1"><stop offset="0" stop-color="#e9f2fb"/><stop offset="1" stop-color="#8cb7e8"/></linearGradient></defs><path d="M5 24a5 5 0 0 1-1-10 6 6 0 0 1 6-6 7 7 0 0 1 7 3 6.5 6.5 0 0 1 3 13z" fill="url(#cl)"/></svg><span class="bd" style="left:11px;top:5px;width:13px;height:13px;background:#c42b1c;line-height:13px">1</span>
<span style="margin-left:5px">28°C</span><span style="margin-left:9px">Mostly cloudy</span>
<svg style="margin-left:23px" width="14" height="10" fill="none" stroke="#e8e8e8" stroke-width="1.1"><path d="M1 8l6-6 6 6"/></svg>
<svg style="margin-left:11px" width="14" height="18" fill="none" stroke="#d8d8d8"><rect x="2.5" y="3.5" width="8" height="10" rx="3"/><path d="M4 .5h5M4 16.5h5"/><circle cx="6.5" cy="8" r="1.5"/></svg>
<svg style="margin-left:8px" width="18" height="18" fill="none" stroke="#d8d8d8"><rect x="1.5" y="2.5" width="15" height="10"/><rect x=".5" y="2.5" width="7" height="6"/><path d="M5.5 13v4M2 17.5h8"/></svg>
<svg style="margin-left:6px" width="16" height="18" fill="none" stroke="#d8d8d8"><path d="M1 6.5h3l4-4v13l-4-4H1zM10.5 6a4 4 0 0 1 0 6M12.5 3.5a7 7 0 0 1 0 11"/></svg>
<span style="margin-left:10px;font-size:12px;width:24px">РУС</span>
<div class="ck">14:31<br><span style="display:inline-block;margin-top:1px;font-size:11.3px">31.08.2024</span></div>
<div style="width:60px;position:relative;height:40px"><svg style="position:absolute;left:18px;top:9px" width="18" height="18"><path d="M1 1h15v12H7l-3 3v-3H1z" fill="#f4f4f4"/><path d="M4 5h9M4 8h9" stroke="#222"/></svg><span class="bd" style="left:26px;top:18px;width:15px;height:15px;background:#3a3a3a;border:1px solid #777;line-height:15px;font-weight:bold">9</span></div></div>`);
</script>
</body></html>
